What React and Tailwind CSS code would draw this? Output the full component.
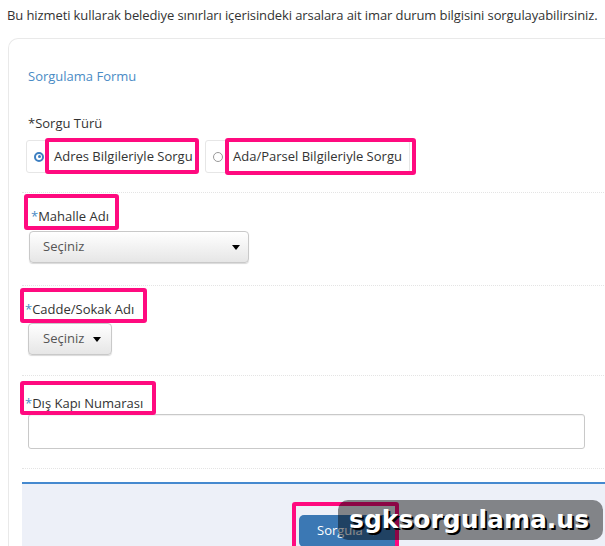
import React from 'react';
import { ChevronRight } from 'lucide-react';

// pink annotation frame drawn over a target element
const Mark = ({ className }) => (
    <span className={`pointer-events-none absolute rounded-[3px] border-4 border-[#ff0a7f] ${className}`} />
);

const Caret = () => (
    <span className="inline-block h-0 w-0 border-x-[4px] border-t-[5px] border-x-transparent border-t-black" />
);

const Label = ({ text, mark, className = 'pl-[6px]' }) => (
    <div className={`leading-[18px] ${className}`}>
        <span className="relative">
            <span className="text-[#4a8bc5]">*</span>
            {text}
            <Mark className={mark} />
        </span>
    </div>
);

const Divider = ({ className }) => (
    <div className={`border-t border-dotted border-[#e4e4e4] ${className}`} />
);

const App = () => {
    return (
        <div className="relative h-[546px] w-[605px] overflow-hidden bg-white font-['Open_Sans',sans-serif] text-[13px] text-[#333]">
            <p className="whitespace-nowrap px-[7px] pt-[6px] leading-[18px] tracking-[-0.1px]">
                Bu hizmeti kullarak belediye sınırları içerisindeki arsalara ait imar durum bilgisini sorgulayabilirsiniz.
            </p>

            <div className="ml-[8px] mt-[14px] w-[640px] rounded-tl-[10px] border-l border-t border-[#e9e9e9] pl-[13px]">
                <div className="pl-[6px] pt-[28px] leading-[18px] text-[#4a8bc5]">Sorgulama Formu</div>

                <div className="mt-[29px] pl-[6px] leading-[18px]">*Sorgu Türü</div>

                <div className="mt-[8px] flex gap-[8px] pl-[4px]">
                    <div className="flex h-[33px] w-[171px] items-center rounded-[3px] border border-[#e6e6e6] pl-[7px]">
                        <span className="flex h-[10px] w-[10px] items-center justify-center rounded-full border-2 border-[#3d7fc1]">
                            <span className="h-[3px] w-[3px] rounded-full bg-[#3d7fc1]" />
                        </span>
                        <span className="relative ml-[10px]">
                            Adres Bilgileriyle Sorgu
                            <Mark className="-bottom-[8px] -left-[9px] -right-[6px] -top-[9px]" />
                        </span>
                    </div>
                    <div className="flex h-[33px] w-[205px] items-center rounded-[3px] border border-[#e6e6e6] pl-[7px]">
                        <span className="h-[10px] w-[10px] rounded-full border-[1.5px] border-[#999]" />
                        <span className="relative ml-[10px]">
                            Ada/Parsel Bilgileriyle Sorgu
                            <Mark className="-bottom-[9px] -left-[8px] -right-[14px] -top-[9px]" />
                        </span>
                    </div>
                </div>

                <Divider className="mt-[19px]" />

                <div className="mt-[14px]">
                    <Label text="Mahalle Adı" className="pl-[9px]" mark="-bottom-[5px] -left-[7px] -right-[10px] -top-[13px]" />
                </div>
                <div className="mt-[6px] pl-[7px]">
                    <div className="flex h-[32px] w-[220px] items-center justify-between rounded-[4px] border border-[#c9c9c9] bg-gradient-to-b from-white to-[#e6e6e6] pl-[13px] pr-[8px] text-[#555] shadow-[0_1px_1px_rgba(0,0,0,0.15)]">
                        Seçiniz
                        <Caret />
                    </div>
                </div>

                <Divider className="mt-[22px]" />

                <div className="mt-[14px]">
                    <Label text="Cadde/Sokak Adı" className="pl-[3px]" mark="-bottom-[5px] -left-[5px] -right-[13px] -top-[12px]" />
                </div>
                <div className="mt-[5px] pl-[6px]">
                    <div className="flex h-[32px] w-[84px] items-center gap-[9px] rounded-[4px] border border-[#c9c9c9] bg-gradient-to-b from-white to-[#e6e6e6] pl-[14px] text-[#555] shadow-[0_1px_1px_rgba(0,0,0,0.15)]">
                        Seçiniz
                        <Caret />
                    </div>
                </div>

                <Divider className="mt-[20px]" />

                <div className="mt-[18px]">
                    <Label text="Dış Kapı Numarası" className="pl-[3px]" mark="-bottom-[3px] -left-[5px] -right-[13px] -top-[13px]" />
                </div>
                <div className="mt-[2px] pl-[6px]">
                    <div className="h-[35px] w-[557px] rounded-[3px] border border-[#c9c9c9] bg-white shadow-[inset_0_1px_1px_rgba(0,0,0,0.06)]" />
                </div>

                <Divider className="mt-[19px]" />

                <div className="mt-[13px] h-[80px] border-t-2 border-[#4589cf] bg-[#edf0f8] pl-[277px] pt-[31px]">
                    <div className="relative inline-flex h-[32px] w-[99px] items-center rounded-[5px] bg-[#3b78b4] pl-[18px] text-white">
                        Sorgula
                        <ChevronRight size={13} strokeWidth={1.5} className="ml-[6px]" />
                        <Mark className="-left-[7px] -right-[1px] -top-[13px] bottom-[-10px]" />
                    </div>
                </div>
            </div>

            <div className="absolute left-[338px] top-[500px] flex h-[40px] w-[265px] items-center rounded-[10px] bg-black/45 pl-[11px] font-['DejaVu_Sans',sans-serif] text-[25px] font-bold text-white [text-shadow:2px_2px_0_#000]">
                sgksorgulama.us
            </div>
        </div>
    );
};

export default App;
